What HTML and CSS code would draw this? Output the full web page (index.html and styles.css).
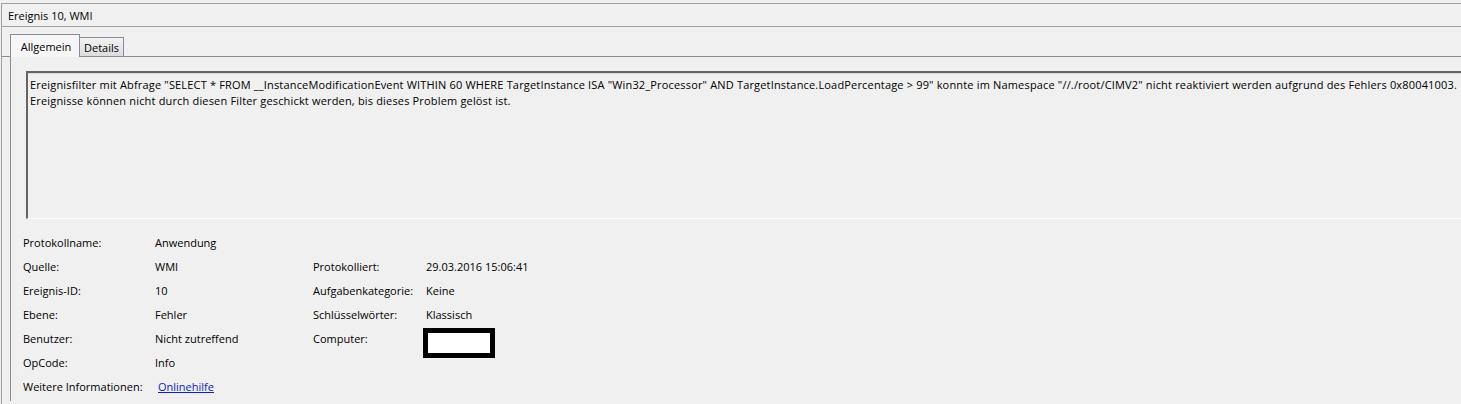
FILE: index.html
```html
<!DOCTYPE html>
<html lang="de">
<head>
<meta charset="utf-8">
<title>Ereignis 10, WMI</title>
<link rel="stylesheet" href="styles.css">
</head>
<body>
<div class="window">
  <div class="titlebar">Ereignis 10, WMI</div>
  <div class="tabstrip">
    <div class="tab active">Allgemein</div>
    <div class="tab details">Details</div>
  </div>
  <div class="panel">
    <div class="message">Ereignisfilter mit Abfrage "SELECT * FROM __InstanceModificationEvent WITHIN 60 WHERE TargetInstance ISA "Win32_Processor" AND TargetInstance.LoadPercentage &gt; 99" konnte im Namespace "//./root/CIMV2" nicht reaktiviert werden aufgrund des Fehlers 0x80041003. Ereignisse können nicht durch diesen Filter geschickt werden, bis dieses Problem gelöst ist.</div>
    <div class="props">
      <div class="lbl">Protokollname:</div><div class="val">Anwendung</div><div></div><div></div>
      <div class="lbl">Quelle:</div><div class="val">WMI</div><div class="lbl">Protokolliert:</div><div class="val">29.03.2016 15:06:41</div>
      <div class="lbl">Ereignis-ID:</div><div class="val">10</div><div class="lbl">Aufgabenkategorie:</div><div class="val">Keine</div>
      <div class="lbl">Ebene:</div><div class="val">Fehler</div><div class="lbl">Schlüsselwörter:</div><div class="val">Klassisch</div>
      <div class="lbl">Benutzer:</div><div class="val">Nicht zutreffend</div><div class="lbl">Computer:</div><div class="val"><span class="redacted"></span></div>
      <div class="lbl">OpCode:</div><div class="val">Info</div><div></div><div></div>
      <div class="lbl">Weitere Informationen:</div><div class="val"><a class="link" href="#">Onlinehilfe</a></div><div></div><div></div>
    </div>
  </div>
</div>
</body>
</html>
```
FILE: styles.css
```css
html, body {
  margin: 0;
  padding: 0;
  background: #f0f0f0;
  overflow: hidden;
}
body {
  font-family: "Open Sans", "Noto Sans", sans-serif;
  font-size: 11px;
  color: #000;
  height: 404px;
}
.window {
  margin-top: 3px;
  margin-left: 1px;
  border-top: 1px solid #a0a0a0;
  border-left: 1px solid #a0a0a0;
  height: 400px;
}
.titlebar {
  height: 22px;
  line-height: 23px;
  padding-left: 6px;
  border-bottom: 1px solid #a0a0a0;
}
.tabstrip {
  display: flex;
  align-items: flex-end;
  height: 29px;
  padding-left: 8px;
  border-bottom: 1px solid #898c95;
}
.tab {
  box-sizing: border-box;
  border: 1px solid #898c95;
  border-bottom: none;
  text-align: center;
}
.tab.active {
  width: 70px;
  height: 23px;
  line-height: 24px;
  padding-left: 2px;
  background: #f6f6f6;
  margin-bottom: -1px;
}
.tab.details {
  width: 45px;
  height: 19px;
  line-height: 19px;
  margin-left: -1px;
  background: linear-gradient(#f2f2f2, #dcdcdc);
}
.panel {
  margin-left: 8px;
  border-left: 1px solid #898c95;
  padding-top: 14px;
  padding-left: 15px;
  height: 330px;
}
.message {
  box-sizing: border-box;
  height: 148px;
  width: 1436px;
  border-top: 2px solid #646464;
  border-left: 2px solid #646464;
  border-bottom: 1px solid #fdfdfd;
  padding: 4px 0 0 2px;
  line-height: 16px;
  letter-spacing: 0.17px;
  box-shadow: 0 1px 0 #d8d8d8 inset;
}
.props {
  display: grid;
  grid-template-columns: 132px 158px 113px 1fr;
  grid-auto-rows: 24px;
  margin-top: 12px;
  margin-left: -3px;
  line-height: 24px;
}
.redacted {
  display: block;
  box-sizing: border-box;
  width: 72px;
  height: 30px;
  margin-left: -3px;
  margin-top: 1px;
  border: 5px solid #000;
  background: #fff;
}
.link {
  color: #0b22c9;
  text-decoration: underline;
  margin-left: 3px;
}
```
